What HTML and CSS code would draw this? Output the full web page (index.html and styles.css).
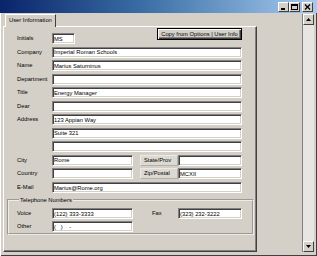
FILE: index.html
```html
<!DOCTYPE html>
<html lang="en">
<head>
    <meta charset="UTF-8">
    <title>User Information</title>
    <link rel="stylesheet" href="styles.css">
</head>
<body>
<div class="window">
    <div class="titlebar">
        <span class="cbtn"><svg width="7" height="6" viewBox="0 0 7 6"><rect x="1" y="4" width="4" height="2" fill="#000"/></svg></span>
        <span class="cbtn"><svg width="7" height="6" viewBox="0 0 7 6"><rect x="0.5" y="0.5" width="6" height="5" fill="none" stroke="#000"/><rect x="0" y="0" width="7" height="2" fill="#000"/></svg></span>
        <span class="cbtn close"><svg width="7" height="6" viewBox="0 0 7 6"><path d="M1 0.5 L6 5.5 M6 0.5 L1 5.5" stroke="#000" stroke-width="1.3"/></svg></span>
    </div>

    <div class="content">
        <div class="tabs">
            <div class="tab-strip"><div class="tab">User Information</div></div>
            <div class="panel">
                <div class="form">
                    <span class="lbl">Initials</span>
                    <div class="field">
                        <input class="txt initials" type="text" value="MS">
                        <button class="copy-btn">Copy from Options | User Info</button>
                    </div>
                    <span class="lbl">Company</span>
                    <div class="field"><input class="txt" type="text" value="Imperial Roman Schools"></div>
                    <span class="lbl">Name</span>
                    <div class="field"><input class="txt" type="text" value="Marius Saturninus"></div>
                    <span class="lbl">Department</span>
                    <div class="field"><input class="txt" type="text" value=""></div>
                    <span class="lbl">Title</span>
                    <div class="field"><input class="txt" type="text" value="Energy Manager"></div>
                    <span class="lbl">Dear</span>
                    <div class="field"><input class="txt" type="text" value=""></div>
                    <span class="lbl">Address</span>
                    <div class="field"><input class="txt" type="text" value="123 Appian Way"></div>
                    <span class="lbl"></span>
                    <div class="field"><input class="txt" type="text" value="Suite 321"></div>
                    <span class="lbl"></span>
                    <div class="field"><input class="txt" type="text" value=""></div>
                    <span class="lbl">City</span>
                    <div class="field">
                        <input class="txt short" type="text" value="Rome">
                        <span class="side-lbl">State/Prov</span>
                        <input class="txt" type="text" value="">
                    </div>
                    <span class="lbl">Country</span>
                    <div class="field">
                        <input class="txt short" type="text" value="">
                        <span class="side-lbl">Zip/Postal</span>
                        <input class="txt" type="text" value="MCXII">
                    </div>
                    <span class="lbl">E-Mail</span>
                    <div class="field"><input class="txt" type="text" value="Marius@Rome.org"></div>
                </div>

                <fieldset class="phones">
                    <legend>Telephone Numbers</legend>
                    <div class="form phone-rows">
                        <span class="lbl">Voice</span>
                        <div class="field">
                            <input class="txt short" type="text" value="(122) 333-3333">
                            <span class="fax-lbl">Fax</span>
                            <input class="txt" type="text" value="(323) 232-3222">
                        </div>
                        <span class="lbl">Other</span>
                        <div class="field"><input class="txt short" type="text" value="(   )    -"></div>
                    </div>
                </fieldset>
            </div>
        </div>

        <div class="scrollbar">
            <div class="sbtn"><svg width="5" height="3" viewBox="0 0 5 3"><path d="M2.5 0 L5 3 L0 3 Z" fill="#000"/></svg></div>
            <div class="track"></div>
            <div class="sbtn"><svg width="5" height="3" viewBox="0 0 5 3"><path d="M0 0 L5 0 L2.5 3 Z" fill="#000"/></svg></div>
        </div>
    </div>
</div>
</body>
</html>
```

FILE: styles.css
```css
body {
    margin: 0;
    width: 317px;
    height: 256px;
    overflow: hidden;
    background: #d4d0c8;
    font-family: "Liberation Sans", Arial, sans-serif;
    font-size: 5.8px;
    color: #000;
}

.window {
    height: 256px;
    display: flex;
    flex-direction: column;
    box-shadow: inset 1px 0 0 #fff, inset -1px -1px 0 #404040;
}

.titlebar {
    height: 13px;
    flex: none;
    display: flex;
    justify-content: flex-end;
    align-items: flex-end;
    padding-right: 4px;
    background: linear-gradient(to right, #0a246a, #3a6ea5 45%, #a6caf0);
}
.cbtn {
    width: 9px;
    height: 8px;
    margin-bottom: 1px;
    display: flex;
    align-items: center;
    justify-content: center;
    background: #d4d0c8;
    border: 1px solid;
    border-color: #fff #404040 #404040 #fff;
}
.cbtn.close { margin-left: 2px; }

.content {
    flex: 1;
    display: flex;
    padding: 1px 3px 4px 3px;
}

.tabs {
    width: 254px;
    display: flex;
    flex-direction: column;
}
.tab-strip {
    height: 12px;
    display: flex;
    padding-left: 2px;
}
.tab {
    line-height: 11px;
    padding: 0 3px;
    background: #d4d0c8;
    border: 1px solid;
    border-color: #fff #404040 transparent #fff;
    border-bottom: none;
    margin-bottom: -1px;
    position: relative;
    z-index: 1;
}
.panel {
    flex: 1;
    padding-top: 6px;
    border: 1px solid;
    border-color: #fff #404040 #404040 #fff;
    box-shadow: inset -1px -1px 0 #808080;
}

.form {
    display: grid;
    grid-template-columns: 35px 190px;
    grid-auto-rows: 11px;
    row-gap: 2.55px;
    padding-left: 13px;
}
.lbl {
    line-height: 11px;
    white-space: nowrap;
}
.field {
    display: flex;
    height: 11px;
}

.txt {
    flex: 1;
    min-width: 0;
    height: 11px;
    box-sizing: border-box;
    margin: 0;
    padding: 0 1px;
    background: #fff;
    font: inherit;
    color: #000;
    border: 1px solid;
    border-color: #808080 #fff #fff #808080;
    box-shadow: inset 1px 1px 0 #404040, inset -1px -1px 0 #d4d0c8;
    outline: none;
}
.txt.initials { flex: none; width: 23px; }
.txt.short { flex: none; width: 81px; }

.copy-btn {
    flex: none;
    width: 85px;
    height: 12px;
    margin: 0 0 4px auto;
    align-self: flex-end;
    padding: 0;
    font: inherit;
    color: #000;
    background: #d4d0c8;
    border: 1px solid #000;
    box-shadow: inset 1px 1px 0 #fff, inset -1px -1px 0 #404040, inset -2px -2px 0 #808080;
}

.side-lbl {
    flex: none;
    width: 38px;
    margin-left: 7px;
    padding-left: 3px;
    box-sizing: border-box;
    line-height: 9px;
    background: #dcd9d2;
    border: 1px solid;
    border-color: #eceae5 #b4b0a8 #b4b0a8 #eceae5;
}
.fax-lbl {
    flex: none;
    width: 26px;
    margin-left: 19px;
    line-height: 11px;
}

.phones {
    margin: 3.5px 2px 0 3px;
    padding: 4.5px 0 1px 8px;
    border: 2px groove #eeece8;
    min-width: 0;
}
.phones legend {
    padding: 0 1px;
    margin-left: 2px;
    line-height: 7px;
}
.phone-rows {
    padding-left: 0;
    row-gap: 2px;
}

.scrollbar {
    width: 11px;
    margin-left: auto;
    display: flex;
    flex-direction: column;
    background: #e8e6e2;
    border-left: 1px solid #808080;
}
.sbtn {
    height: 11px;
    box-sizing: border-box;
    display: flex;
    align-items: center;
    justify-content: center;
    background: #d4d0c8;
    border: 1px solid;
    border-color: #fff #404040 #404040 #fff;
}
.track { flex: 1; }
```
